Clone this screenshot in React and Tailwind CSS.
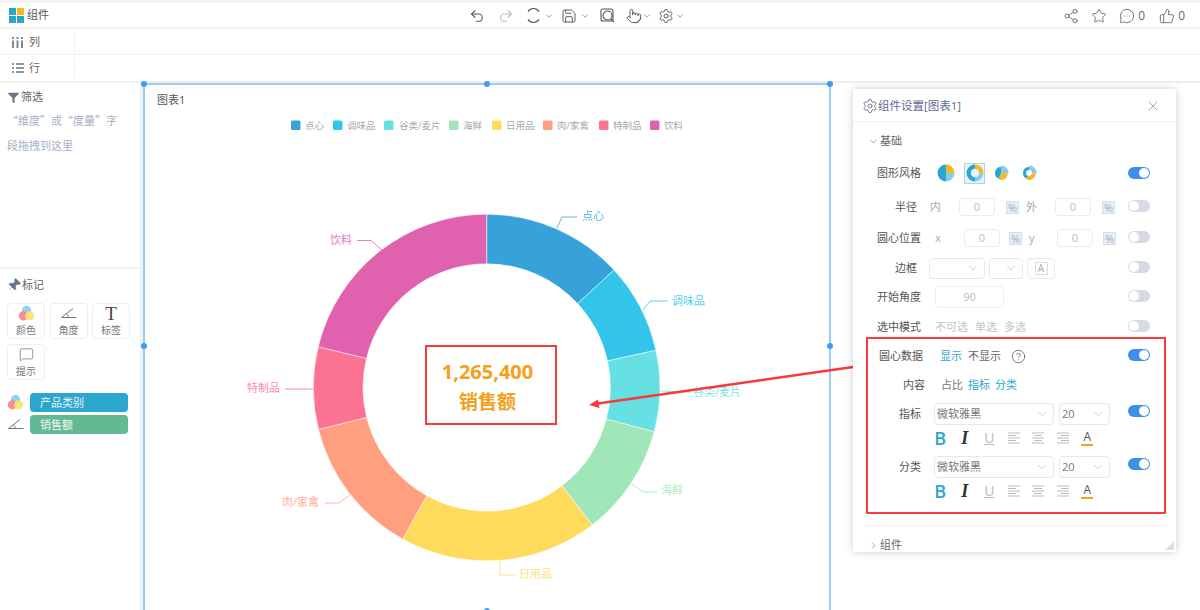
import {
  Undo2, Redo2, Save, ChevronDown, ChevronRight, Settings, Share2, Star, MessageCircleMore,
  ThumbsUp, X, Pointer, Funnel, Pin, MessageSquare, CircleHelp,
} from 'lucide-react';

const donutCx = 486.7;
const donutCy = 387.5;

const segmentos = [
  { nombre: '点心', color: '#37a2da', desde: 0, hasta: 47.3 },
  { nombre: '调味品', color: '#32c5e9', desde: 47.3, hasta: 77.6 },
  { nombre: '谷类/麦片', color: '#67e0e3', desde: 77.6, hasta: 104.8 },
  { nombre: '海鲜', color: '#9fe6b8', desde: 104.8, hasta: 142.5 },
  { nombre: '日用品', color: '#ffdb5c', desde: 142.5, hasta: 209 },
  { nombre: '肉/家禽', color: '#ff9f7f', desde: 209, hasta: 256 },
  { nombre: '特制品', color: '#fb7293', desde: 256, hasta: 283.6 },
  { nombre: '饮料', color: '#e062ae', desde: 283.6, hasta: 360 },
];

const leyenda = [
  { x: 291, tx: 305 }, { x: 333, tx: 347 }, { x: 384, tx: 399 }, { x: 449, tx: 463 },
  { x: 492, tx: 506 }, { x: 543, tx: 557 }, { x: 599, tx: 613 }, { x: 650, tx: 664 },
];

const etiquetas = [
  { t: '点心', x: 582, y: 216, c: '#37a2da', p: '557,228 562,217 577,217' },
  { t: '调味品', x: 672, y: 301, c: '#32c5e9', p: '643,310 650,301 668,301' },
  { t: '谷类/麦片', x: 693, y: 392, c: '#67e0e3', p: '661,391 690,392' },
  { t: '海鲜', x: 661, y: 490, c: '#9fe6b8', p: '632,484 643,492 657,492' },
  { t: '日用品', x: 519, y: 574, c: '#ffdb5c', p: '500,561 500,575 515,575' },
  { t: '肉/家禽', x: 282, y: 502, c: '#ff9f7f', p: '350,495 339,503 325,503' },
  { t: '特制品', x: 247, y: 388, c: '#fb7293', p: '313,389 285,389' },
  { t: '饮料', x: 330, y: 240, c: '#e062ae', p: '382,250 371,240.5 357,240.5' },
];

const punto = (cx, cy, r, grados) => {
  const rad = (grados * Math.PI) / 180;
  return [cx + r * Math.sin(rad), cy - r * Math.cos(rad)];
};

const arco = (cx, cy, rIn, rOut, desde, hasta) => {
  const [x1, y1] = punto(cx, cy, rOut, desde);
  const [x2, y2] = punto(cx, cy, rOut, hasta);
  const grande = hasta - desde > 180 ? 1 : 0;
  if (rIn === 0) return `M${cx} ${cy}L${x1} ${y1}A${rOut} ${rOut} 0 ${grande} 1 ${x2} ${y2}Z`;
  const [x3, y3] = punto(cx, cy, rIn, hasta);
  const [x4, y4] = punto(cx, cy, rIn, desde);
  return `M${x1} ${y1}A${rOut} ${rOut} 0 ${grande} 1 ${x2} ${y2}L${x3} ${y3}A${rIn} ${rIn} 0 ${grande} 0 ${x4} ${y4}Z`;
};

const EstiloGrafico = ({ partes, rIn = 0 }) => (
  <svg width="18" height="18" viewBox="0 0 18 18">
    {partes.map((p, i) => (
      <path key={i} d={arco(9, 9, rIn, p.r, p.a, p.b)} fill={p.c} />
    ))}
  </svg>
);

const Toggle = ({ on }) => (
  <div className={`w-[22px] h-[12px] rounded-full flex items-center px-px ${on ? 'bg-[#3f8fe8] justify-end' : 'bg-[#d5dae4] justify-start'}`}>
    <div className="w-[10px] h-[10px] rounded-full bg-white" />
  </div>
);

const Entrada = ({ ancho, valor, ml }) => (
  <div className={`h-[18px] border border-[#e8ebf0] rounded-sm flex items-center justify-center text-[#bbb] ${ancho} ${ml}`}>{valor}</div>
);

const Porcentaje = ({ ml }) => (
  <div className={`w-[13px] h-[13px] bg-[#e9eff4] border border-[#d5dfe8] flex items-center justify-center text-[11px] leading-none text-[#9fb0c0] ${ml}`}>%</div>
);

const Selector = ({ ancho, ml, texto, alto = 'h-[22px]' }) => (
  <div className={`${alto} ${ancho} ${ml} border border-[#e6e8ee] rounded flex items-center justify-between pl-[2px] pr-[4px] text-[#777]`}>
    <span>{texto}</span>
    <ChevronDown size={14} strokeWidth={1} className="text-[#aaa]" />
  </div>
);

const Alinear = ({ tipo }) => {
  const lineas = [12, 8, 12, 8, 12];
  return (
    <svg width="12" height="12" viewBox="0 0 12 12" stroke="#bbb" strokeWidth="1">
      {lineas.map((l, i) => {
        const x = tipo === 'left' ? 0 : tipo === 'center' ? (12 - l) / 2 : 12 - l;
        return <line key={i} x1={x} x2={x + l} y1={i * 2.5 + 1} y2={i * 2.5 + 1} />;
      })}
    </svg>
  );
};

const BarraTexto = ({ className }) => (
  <div className={`flex items-center h-5 pl-[60px] ${className}`}>
    <div className="w-[24.5px] flex justify-center text-[18px] leading-none font-semibold text-[#2ba6cf]">B</div>
    <div className="w-[24.5px] flex justify-center text-[18px] leading-none font-bold italic text-[#333] font-['Liberation_Serif',serif]">I</div>
    <div className="w-[24.5px] flex justify-center text-[14px] leading-none text-[#bbb] underline">U</div>
    <div className="w-[24.5px] flex justify-center"><Alinear tipo="left" /></div>
    <div className="w-[24.5px] flex justify-center"><Alinear tipo="center" /></div>
    <div className="w-[24.5px] flex justify-center"><Alinear tipo="right" /></div>
    <div className="w-[24.5px] flex justify-center">
      <div className="w-3 flex flex-col items-center text-[12px] leading-[12px] text-[#555] border-b-2 border-[#f5a01b] pb-px">A</div>
    </div>
  </div>
);

const TresColores = ({ size = 22 }) => (
  <svg width={size} height={size} viewBox="0 0 22 22">
    <circle cx="11" cy="7" r="6" fill="#8fd3f0" />
    <circle cx="7" cy="14" r="6" fill="#fb7f85" fillOpacity="0.9" />
    <circle cx="15" cy="14" r="6" fill="#fbe26f" fillOpacity="0.9" />
  </svg>
);

const Angulo = ({ size = 16 }) => (
  <svg width={size} height={size * 0.75} viewBox="0 0 16 12" fill="none" stroke="#666" strokeWidth="0.9">
    <path d="M0.5 10.5H15.5M0.5 10.5L12 1.5M5.5 6.7C6.6 7.6 7.2 9 7.2 10.5" />
  </svg>
);

const Casilla = ({ children, texto }) => (
  <div className="w-[38px] h-[36px] border border-[#eee] rounded flex flex-col items-center justify-end pb-px">
    <div className="h-[20px] flex items-center justify-center">{children}</div>
    <span className="text-[10px] leading-[14px] text-[#777]">{texto}</span>
  </div>
);

const Asa = ({ className }) => (
  <div className={`absolute w-[6px] h-[6px] rounded-full bg-[#3d9bf5] ${className}`} />
);

const Grafico = () => (
  <svg className="block" width="684" height="526" viewBox="145 85 684 526" overflow="visible">
    {leyenda.map((l, i) => (
      <g key={i}>
        <rect x={l.x} y="120.5" width="9.5" height="9.5" rx="1.5" fill={segmentos[i].color} />
        <text x={l.tx} y="128.5" fontSize="9.5" fill="#aaa">{segmentos[i].nombre}</text>
      </g>
    ))}
    {segmentos.map((s) => (
      <path key={s.nombre} d={arco(donutCx, donutCy, 123.7, 173.3, s.desde, s.hasta)} fill={s.color} stroke="#fff" strokeWidth="0.5" />
    ))}
    {etiquetas.map((e) => (
      <g key={e.t}>
        <polyline points={e.p} fill="none" stroke={e.c} strokeOpacity="0.8" strokeWidth="1" />
        <text x={e.x} y={e.y + 4} fontSize="11" fill={e.c} fillOpacity="0.85">{e.t}</text>
      </g>
    ))}
    <line x1="853" y1="367" x2="598" y2="403.6" stroke="#f63b3b" strokeWidth="2.5" />
    <polygon points="589,405 598,399.5 599.5,408" fill="#f63b3b" />
  </svg>
);

const PanelAjustes = () => (
  <div className="absolute left-[853px] top-[89px] w-[323px] h-[463px] bg-white shadow-[0_0_8px_rgba(0,0,0,0.2)] text-[11px] text-[#555] overflow-hidden">
    <div className="h-[33px] pt-[2px] border-b border-[#eef0f3] flex items-center pl-[9px] pr-[15px] text-[#5b6b8f] text-[11.5px]">
      <Settings size={16} strokeWidth={1.3} />
      <span>组件设置[图表1]</span>
      <X size={16} strokeWidth={1} className="ml-auto text-[#777]" />
    </div>

    <div className="h-5 mt-[9px] flex items-center pl-[15px]">
      <ChevronDown size={11} strokeWidth={1.2} />
      <span className="ml-px text-[#666]">基础</span>
    </div>

    <div className="h-5 mt-3 flex items-center pl-6 pr-[26px]">
      <span className="w-[45px]">图形风格</span>
      <div className="ml-[15px] flex items-center">
        <EstiloGrafico partes={[
          { a: 180, b: 360, r: 8.5, c: '#2ba6cf' },
          { a: 0, b: 90, r: 8.5, c: '#f8b822' },
          { a: 90, b: 180, r: 8.5, c: '#88cde6' },
        ]} />
        <div className="ml-[9px] w-[21px] h-[21px] bg-[#e8f4fb] border border-[#a9d6ef] flex items-center justify-center">
          <EstiloGrafico rIn={4.2} partes={[
            { a: 180, b: 360, r: 8.5, c: '#2ba6cf' },
            { a: 0, b: 90, r: 8.5, c: '#f8b822' },
            { a: 90, b: 180, r: 8.5, c: '#88cde6' },
          ]} />
        </div>
        <div className="ml-[7px]">
          <EstiloGrafico partes={[
            { a: 0, b: 95, r: 7.5, c: '#88cde6' },
            { a: 95, b: 200, r: 7, c: '#f8b822' },
            { a: 200, b: 360, r: 6, c: '#2ba6cf' },
          ]} />
        </div>
        <div className="ml-[10px]">
          <EstiloGrafico rIn={3} partes={[
            { a: 0, b: 95, r: 7.5, c: '#88cde6' },
            { a: 95, b: 200, r: 7, c: '#f8b822' },
            { a: 200, b: 360, r: 6, c: '#2ba6cf' },
          ]} />
        </div>
      </div>
      <div className="ml-auto"><Toggle on /></div>
    </div>

    <div className="h-5 mt-[14px] flex items-center pl-6 pr-[26px]">
      <span className="w-10 text-right">半径</span>
      <span className="ml-[13px] w-[11px] text-[#aaa]">内</span>
      <Entrada ancho="w-9" ml="ml-[18px]" valor="0" />
      <Porcentaje ml="ml-[11px]" />
      <span className="ml-[7px] w-[11px] text-[#aaa]">外</span>
      <Entrada ancho="w-9" ml="ml-[18px]" valor="0" />
      <Porcentaje ml="ml-[11px]" />
      <div className="ml-auto mb-[3px]"><Toggle /></div>
    </div>

    <div className="h-5 mt-[11px] flex items-center pl-6 pr-[26px]">
      <span className="w-[45px]">圆心位置</span>
      <span className="ml-[13px] w-[6px] text-[#aaa]">x</span>
      <Entrada ancho="w-9" ml="ml-[23px]" valor="0" />
      <Porcentaje ml="ml-[9px]" />
      <span className="ml-[7px] w-[5px] text-[#aaa]">y</span>
      <Entrada ancho="w-9" ml="ml-[23px]" valor="0" />
      <Porcentaje ml="ml-[10px]" />
      <div className="ml-auto mb-[3px]"><Toggle /></div>
    </div>

    <div className="h-5 mt-[10px] flex items-center pl-6 pr-[26px]">
      <span className="w-10 text-right">边框</span>
      <Selector ancho="w-14" ml="ml-3" alto="h-[21px]" />
      <Selector ancho="w-[34px]" ml="ml-1" alto="h-[21px]" />
      <div className="ml-1 w-7 h-[21px] border border-[#e8ebf0] rounded flex items-center justify-center">
        <span className="w-[13px] h-[13px] border border-[#ddd] flex items-center justify-center text-[10px] leading-none text-[#aaa]">A</span>
      </div>
      <div className="ml-auto mb-[2px]"><Toggle /></div>
    </div>

    <div className="h-5 mt-[9px] flex items-center pl-6 pr-[26px]">
      <span className="w-[45px]">开始角度</span>
      <div className="ml-[13px] w-[69px] h-[22px] border border-[#eee] rounded flex items-center justify-center text-[#bbb]">90</div>
      <div className="ml-auto mb-[3px]"><Toggle /></div>
    </div>

    <div className="h-5 mt-[10px] flex items-center pl-6 pr-[26px]">
      <span className="w-[45px]">选中模式</span>
      <div className="ml-[13px] flex gap-[7px] text-[#c4c4c4]">
        <span>不可选</span><span>单选</span><span>多选</span>
      </div>
      <div className="ml-auto mb-[2px]"><Toggle /></div>
    </div>

    <div className="ml-[13px] mr-[10px] border-2 border-[#f63b3b] pt-[7px] pb-[11px]">
      <div className="h-5 flex items-center pl-[11px] pr-[14px]">
        <span className="w-11">圆心数据</span>
        <span className="ml-[17px] text-[#2ba6cf]">显示</span>
        <span className="ml-[6px] text-[#666]">不显示</span>
        <CircleHelp size={15} strokeWidth={1.2} className="ml-[10px] text-[#555]" />
        <div className="ml-auto mb-[3px]"><Toggle on /></div>
      </div>
      <div className="h-5 mt-[9px] flex items-center pl-[11px]">
        <span className="w-[46px] text-right">内容</span>
        <span className="ml-4 text-[#777]">占比</span>
        <span className="ml-[5px] text-[#2ba6cf]">指标</span>
        <span className="ml-[5px] text-[#2ba6cf]">分类</span>
      </div>
      <div className="h-[22px] mt-2 flex items-center pl-[11px] pr-[14px]">
        <span className="w-[42px] text-right">指标</span>
        <Selector ancho="w-[120px]" ml="ml-[13px]" texto="微软雅黑" />
        <Selector ancho="w-[51px]" ml="ml-[5px]" texto="20" />
        <div className="ml-auto self-start mt-[2px]"><Toggle on /></div>
      </div>
      <BarraTexto className="mt-[3px]" />
      <div className="h-[22px] mt-2 flex items-center pl-[11px] pr-[14px]">
        <span className="w-[42px] text-right">分类</span>
        <Selector ancho="w-[120px]" ml="ml-[13px]" texto="微软雅黑" />
        <Selector ancho="w-[51px]" ml="ml-[5px]" texto="20" />
        <div className="ml-auto self-start mt-[2px]"><Toggle on /></div>
      </div>
      <BarraTexto className="mt-[3px]" />
    </div>

    <div className="mt-[11px] mx-[11px] border-t border-[#eef0f3]" />

    <div className="h-5 mt-[9px] flex items-center pl-[15px] text-[#666]">
      <ChevronRight size={11} strokeWidth={1.2} />
      <span className="ml-px">组件</span>
    </div>

    <div className="absolute right-[2px] bottom-[2px] w-0 h-0 border-l-[9px] border-l-transparent border-b-[9px] border-b-[#ddd]" />
  </div>
);

export default function App() {
  return (
    <div className="relative w-[1200px] h-[610px] overflow-hidden bg-white flex flex-col font-['Open_Sans','Noto_Sans_CJK_SC',sans-serif] text-[#555]">
      <div className="h-[3px] bg-[#f3f3f3]" />

      {/* --- toolbar --- */}
      <div className="h-[24px] flex items-center pl-[9px] pr-[15px] pt-px">
        <div className="w-[460px] flex items-center">
          <svg width="15" height="15" viewBox="0 0 15 15">
            <rect width="7" height="7" fill="#2ba6cf" />
            <rect x="8" width="7" height="7" fill="#f8b822" />
            <rect y="8" width="7" height="7" fill="#2ba6cf" />
            <rect x="8" y="8" width="7" height="7" fill="#2ba6cf" />
          </svg>
          <span className="ml-[3px] text-[11px] text-[#555]">组件</span>
        </div>
        <div className="flex items-center text-[#555]">
          <Undo2 size={16} strokeWidth={1.6} />
          <Redo2 size={16} strokeWidth={1.6} className="ml-[13px] text-[#bbb]" />
          <svg className="ml-[11.5px]" width="15" height="15" viewBox="0 0 15 15" fill="none" stroke="#555" strokeWidth="1.1">
            <path d="M2 3.6A6.5 6.5 0 0 1 13 3.6M13 11.4A6.5 6.5 0 0 1 2 11.4" />
          </svg>
          <ChevronDown size={10} strokeWidth={1.4} className="ml-[3.5px]" />
          <Save size={16} strokeWidth={1.4} className="ml-[7px]" />
          <ChevronDown size={10} strokeWidth={1.4} className="ml-[3px]" />
          <svg className="ml-[9.5px]" width="15" height="15" viewBox="0 0 15 15" fill="none" stroke="#555" strokeWidth="1.1">
            <rect x="1" y="1" width="12" height="12" rx="2" />
            <circle cx="7.5" cy="7.5" r="4.5" />
            <path d="M10.8 10.8L14 14" />
          </svg>
          <Pointer size={16} strokeWidth={1.4} className="ml-[11.5px]" />
          <ChevronDown size={10} strokeWidth={1.4} />
          <Settings size={16} strokeWidth={1.4} className="ml-[6px]" />
          <ChevronDown size={10} strokeWidth={1.4} className="ml-px" />
        </div>
        <div className="ml-auto flex items-center text-[#666] text-[12px]">
          <Share2 size={16} strokeWidth={1.3} />
          <Star size={16} strokeWidth={1.3} className="ml-3" />
          <MessageCircleMore size={16} strokeWidth={1.3} className="ml-3" />
          <span className="ml-[3px]">0</span>
          <ThumbsUp size={16} strokeWidth={1.3} className="ml-[14px]" />
          <span className="ml-[3px]">0</span>
        </div>
      </div>
      <div className="h-[2px] bg-[#f3f3f3]" />

      {/* --- filas y columnas --- */}
      <div className="h-[26px] border-b border-[#f1f1f1]">
        <div className="w-[75px] h-5 mt-[3px] flex items-center pl-[12px] border-r border-[#f1f1f1] text-[11px]">
          <svg width="11" height="11" viewBox="0 0 11 11" fill="#7d8a99">
            <path d="M0 0H2V2H0ZM0 3.5H2V11H0ZM4.5 0H6.5V2H4.5ZM4.5 3.5H6.5V11H4.5ZM9 0H11V2H9ZM9 3.5H11V11H9Z" />
          </svg>
          <span className="ml-[6px] text-[#666]">列</span>
        </div>
      </div>
      <div className="h-[26px]">
        <div className="w-[75px] h-5 mt-[3px] flex items-center pl-[12px] border-r border-[#f1f1f1] text-[11px]">
          <svg width="12" height="10" viewBox="0 0 12 10" stroke="#66758a" strokeWidth="1.3">
            <path d="M0 1H2M4 1H12M0 5H2M4 5H12M0 9H2M4 9H12" />
          </svg>
          <span className="ml-[5px] text-[#666]">行</span>
        </div>
      </div>

      <div className="flex-1 flex min-h-0">
        {/* --- barra lateral --- */}
        <div className="w-[140px] flex flex-col">
          <div className="h-[188px] border-y-2 border-[#f3f3f3] border-t-[#f1f1f1] pl-[7px] pt-[6px]">
            <div className="flex items-center text-[11px] text-[#666]">
              <Funnel size={13} fill="#66758a" strokeWidth={0} />
              <span className="ml-px">筛选</span>
            </div>
            <p className="mt-[2px] w-[114px] text-[11px] leading-[25px] text-[#a3b1c6] font-['Noto_Sans_CJK_SC',sans-serif]">“维度”或“度量”字段拖拽到这里</p>
          </div>
          <div className="pl-[7px] pt-[8px]">
            <div className="flex items-center text-[11px] text-[#666]">
              <Pin size={14} fill="#66758a" stroke="#66758a" strokeWidth={1} className="rotate-45" />
              <span className="ml-px">标记</span>
            </div>
            <div className="mt-[9px] w-[126px] flex flex-wrap gap-x-[4.5px] gap-y-[5px]">
              <Casilla texto="颜色"><TresColores size={17} /></Casilla>
              <Casilla texto="角度"><Angulo /></Casilla>
              <Casilla texto="标签"><span className="text-[19px] leading-none text-[#444] font-['Liberation_Serif',serif]">T</span></Casilla>
              <Casilla texto="提示"><MessageSquare size={15} strokeWidth={1} className="text-[#555]" /></Casilla>
            </div>
            <div className="mt-[13px] flex items-center">
              <TresColores size={17} />
              <div className="ml-[6px] w-[98px] h-[19px] rounded bg-[#2ba6cf] pl-[10px] text-[11px] leading-[19px] text-white/90">产品类别</div>
            </div>
            <div className="mt-[3px] flex items-center">
              <div className="w-[17px] flex justify-center"><Angulo /></div>
              <div className="ml-[6px] w-[98px] h-[19px] rounded bg-[#64b995] pl-[10px] text-[11px] leading-[19px] text-white/90">销售额</div>
            </div>
          </div>
        </div>

        {/* --- lienzo --- */}
        <div className="flex-1 border-l-[3px] border-[#f1f1f1]">
          <div className="h-[2px] bg-[#eeeff0]" />
          <div className="relative w-[688px] h-[530px] border-2 border-[#9ccbf5]">
            <span className="absolute left-[12px] top-[7px] text-[11px] text-[#555]">图表1</span>
            <Grafico />
            <div className="absolute left-[280px] top-[260px] w-[132px] h-[80px] border-2 border-[#f63b3b] pr-[7px] pt-[4px] flex flex-col items-center justify-center font-bold text-[#f5a01b]">
              <span className="text-[20px] leading-[30px]">1,265,400</span>
              <span className="text-[19px] leading-[30px]">销售额</span>
            </div>
            <Asa className="-left-[4px] -top-[4px]" />
            <Asa className="left-[339px] -top-[4px]" />
            <Asa className="-right-[4px] -top-[4px]" />
            <Asa className="-left-[4px] top-[258px]" />
            <Asa className="-right-[4px] top-[258px]" />
            <Asa className="left-[339px] top-[523px]" />
          </div>
        </div>
      </div>

      <PanelAjustes />
    </div>
  );
}
